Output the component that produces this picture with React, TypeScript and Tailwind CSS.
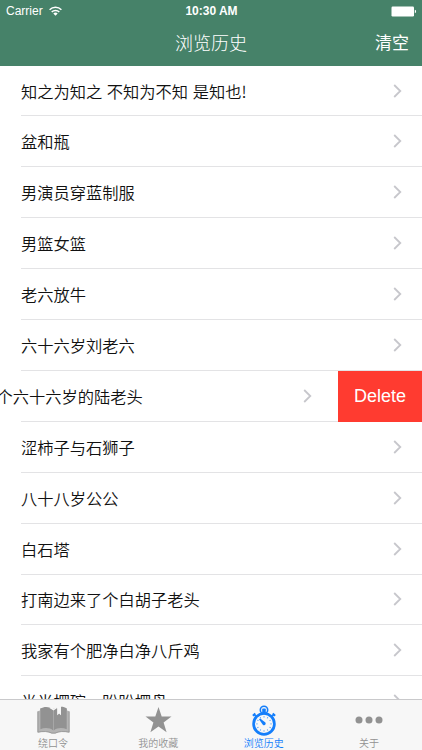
import type { ReactNode } from 'react';
import { clsx } from 'clsx';

interface HistoryItem {
  title: string;
  swiped?: boolean;
}

interface TabProps {
  label: string;
  icon: ReactNode;
  active?: boolean;
}

const items: HistoryItem[] = [
  { title: '知之为知之 不知为不知 是知也!' },
  { title: '盆和瓶' },
  { title: '男演员穿蓝制服' },
  { title: '男篮女篮' },
  { title: '老六放牛' },
  { title: '六十六岁刘老六' },
  { title: '个六十六岁的陆老头', swiped: true },
  { title: '涩柿子与石狮子' },
  { title: '八十八岁公公' },
  { title: '白石塔' },
  { title: '打南边来了个白胡子老头' },
  { title: '我家有个肥净白净八斤鸡' },
  { title: '半半摆碗，盼盼摆盘' },
];

const Chevron = () => (
  <svg className="h-[14px] w-[9px] shrink-0" viewBox="0 0 9 14" fill="none">
    <path d="M1.2 1L7.3 7L1.2 13" stroke="#c7c7cc" strokeWidth="1.8" />
  </svg>
);

const WifiIcon = () => (
  <svg className="h-[10px] w-[13px]" viewBox="0 0 13 10" fill="none" stroke="white" strokeWidth="1.5">
    <path d="M0.6 3.8C3.9 0.4 9.1 0.4 12.4 3.8" />
    <path d="M2.7 6C4.8 3.9 8.2 3.9 10.3 6" />
    <path d="M6.5 9.7L4.3 7.4C5.5 6.3 7.5 6.3 8.7 7.4Z" fill="white" stroke="none" />
  </svg>
);

const BatteryIcon = () => (
  <svg className="h-[11px] w-[26px]" viewBox="0 0 26 11" fill="white">
    <rect x="0.5" y="0.5" width="22.5" height="10" rx="1.2" />
    <path d="M23.8 3.8C25.5 4 25.5 7 23.8 7.2Z" />
  </svg>
);

const BookIcon = () => (
  <svg className="h-[28px] w-[33px]" viewBox="0 0 33 28" fill="#929292">
    <path d="M.5 5.2L3 4.4V2.5H30V4.4L32.5 5.2V26.5C27 25.5 22 25.5 18.4 27.5H14.6C11 25.5 6 25.5 .5 26.5Z" fill="#b4b4b4" />
    <path d="M3.4 2.5C7.5 0 13 .4 16.2 3.8V24.5C13 21.6 7.5 21.4 3.4 23.2Z" />
    <path d="M16.8 3.8C18 2.6 19 1.9 20.2 1.5V9.3L22.1 7.6L24 9.3V.8C26.5.8 28.3 1.4 29.7 2.5V23.2C25.5 21.4 20 21.6 16.8 24.5Z" />
    <path d="M16.5 3L18.5 1.6L20.2 .9L24 0V9.3L22.1 7.6L20.2 9.3V2L16.5 4.4L12.5 2H16.5Z" fill="#f7f7f7" />
    <path d="M.9 5.6V26.2C6 25.2 11 25.2 14.8 27.1H18.2C22 25.2 27 25.2 32.1 26.2V5.6" fill="none" stroke="#929292" strokeWidth="0.8" />
  </svg>
);

const StarIcon = () => (
  <svg className="h-[26px] w-[27px]" viewBox="0 0 27 26" fill="#929292">
    <path d="M13.5 0L16.7 9.6H26.5L18.6 15.6L21.6 25.3L13.5 19.4L5.4 25.3L8.4 15.6L.5 9.6H10.3Z" />
  </svg>
);

const TICKS = [0, 30, 60, 90, 120, 150, 180, 210, 240, 270, 300, 330];

const StopwatchIcon = () => (
  <svg className="h-[31px] w-[24px]" viewBox="0 0 24 31" fill="none" stroke="#147efb">
    <circle cx="12" cy="4.9" r="3.7" strokeWidth="1.6" />
    <rect x="10.2" y="3.6" width="3.6" height="5" rx="0.8" fill="#147efb" stroke="none" />
    <path d="M4 11.5L2.4 9.8M20 11.5L21.6 9.8" strokeWidth="1.5" />
    <path d="M.9 10.8L3.3 8.5M20.7 8.5L23.1 10.8" strokeWidth="2" />
    <circle cx="12" cy="18.9" r="10.4" strokeWidth="2.7" />
    {TICKS.map((angle) => (
      <path key={angle} d="M12 11.2V12.5" strokeWidth="0.9" opacity="0.8" transform={`rotate(${angle} 12 18.9)`} />
    ))}
    <path d="M7 14.2L8.2 13.4L13.4 17.6C14.3 19.4 12.9 20.9 11 20Z" fill="#147efb" stroke="none" />
  </svg>
);

const DotsIcon = () => (
  <svg className="h-[8px] w-[28px]" viewBox="0 0 28 8" fill="#929292">
    <circle cx="4" cy="4" r="3.5" />
    <circle cx="14" cy="4" r="3.5" />
    <circle cx="24" cy="4" r="3.5" />
  </svg>
);

const HistoryRow = ({ title, swiped }: HistoryItem) => (
  <li className="flex h-[50.9px] shrink-0">
    <div
      className={clsx(
        'ml-[21px] flex min-w-0 flex-1 items-center justify-between border-b border-[#e3e3e5]',
        swiped ? 'pr-[26px]' : 'pr-[20px]',
      )}
    >
      <span className={clsx('whitespace-nowrap text-[16.25px] leading-6 [word-spacing:1px]', swiped && '-ml-[24.5px]')}>
        {title}
      </span>
      <Chevron />
    </div>
    {swiped && (
      <button className="w-[84px] bg-[#ff3b30] pt-px font-['Liberation_Sans'] text-[18px] text-white">Delete</button>
    )}
  </li>
);

const Tab = ({ label, icon, active }: TabProps) => (
  <button className="flex w-[90px] flex-col items-center">
    <span className="flex h-[36px] items-center pt-[4px]">{icon}</span>
    <span className={clsx('text-[10px] leading-[14px]', active ? 'text-[#147efb]' : 'text-[#929292]')}>
      {label}
    </span>
  </button>
);

const App = () => {
  return (
    <div className="flex h-[750px] w-[422px] flex-col overflow-hidden bg-white font-['Noto_Sans_CJK_SC',sans-serif] text-[#111]">
      <header className="h-[65.6px] shrink-0 bg-[#468269] text-white">
        <div className="grid h-[22px] grid-cols-3 items-center pl-[6px] pr-[5px] font-['Liberation_Sans'] text-[12px]">
          <div className="flex items-center gap-[6px]">
            <span>Carrier</span>
            <WifiIcon />
          </div>
          <span className="text-center text-[12px] font-bold">10:30 AM</span>
          <div className="flex justify-end">
            <BatteryIcon />
          </div>
        </div>
        <div className="grid h-[40px] grid-cols-3 items-center px-[13px]">
          <h1 className="col-start-2 text-center text-[18px] font-light">浏览历史</h1>
          <button className="text-right text-[17px]">清空</button>
        </div>
      </header>
      <ul className="flex min-h-0 flex-1 flex-col overflow-hidden font-[350]">
        {items.map((item) => (
          <HistoryRow key={item.title} {...item} />
        ))}
      </ul>
      <nav className="flex h-[51px] shrink-0 justify-between border-t border-[#c9c9cb] bg-[#f7f7f7] px-[8px] font-[350]">
        <Tab label="绕口令" icon={<BookIcon />} />
        <Tab label="我的收藏" icon={<StarIcon />} />
        <Tab label="浏览历史" icon={<StopwatchIcon />} active />
        <Tab label="关于" icon={<DotsIcon />} />
      </nav>
    </div>
  );
};

export default App;
